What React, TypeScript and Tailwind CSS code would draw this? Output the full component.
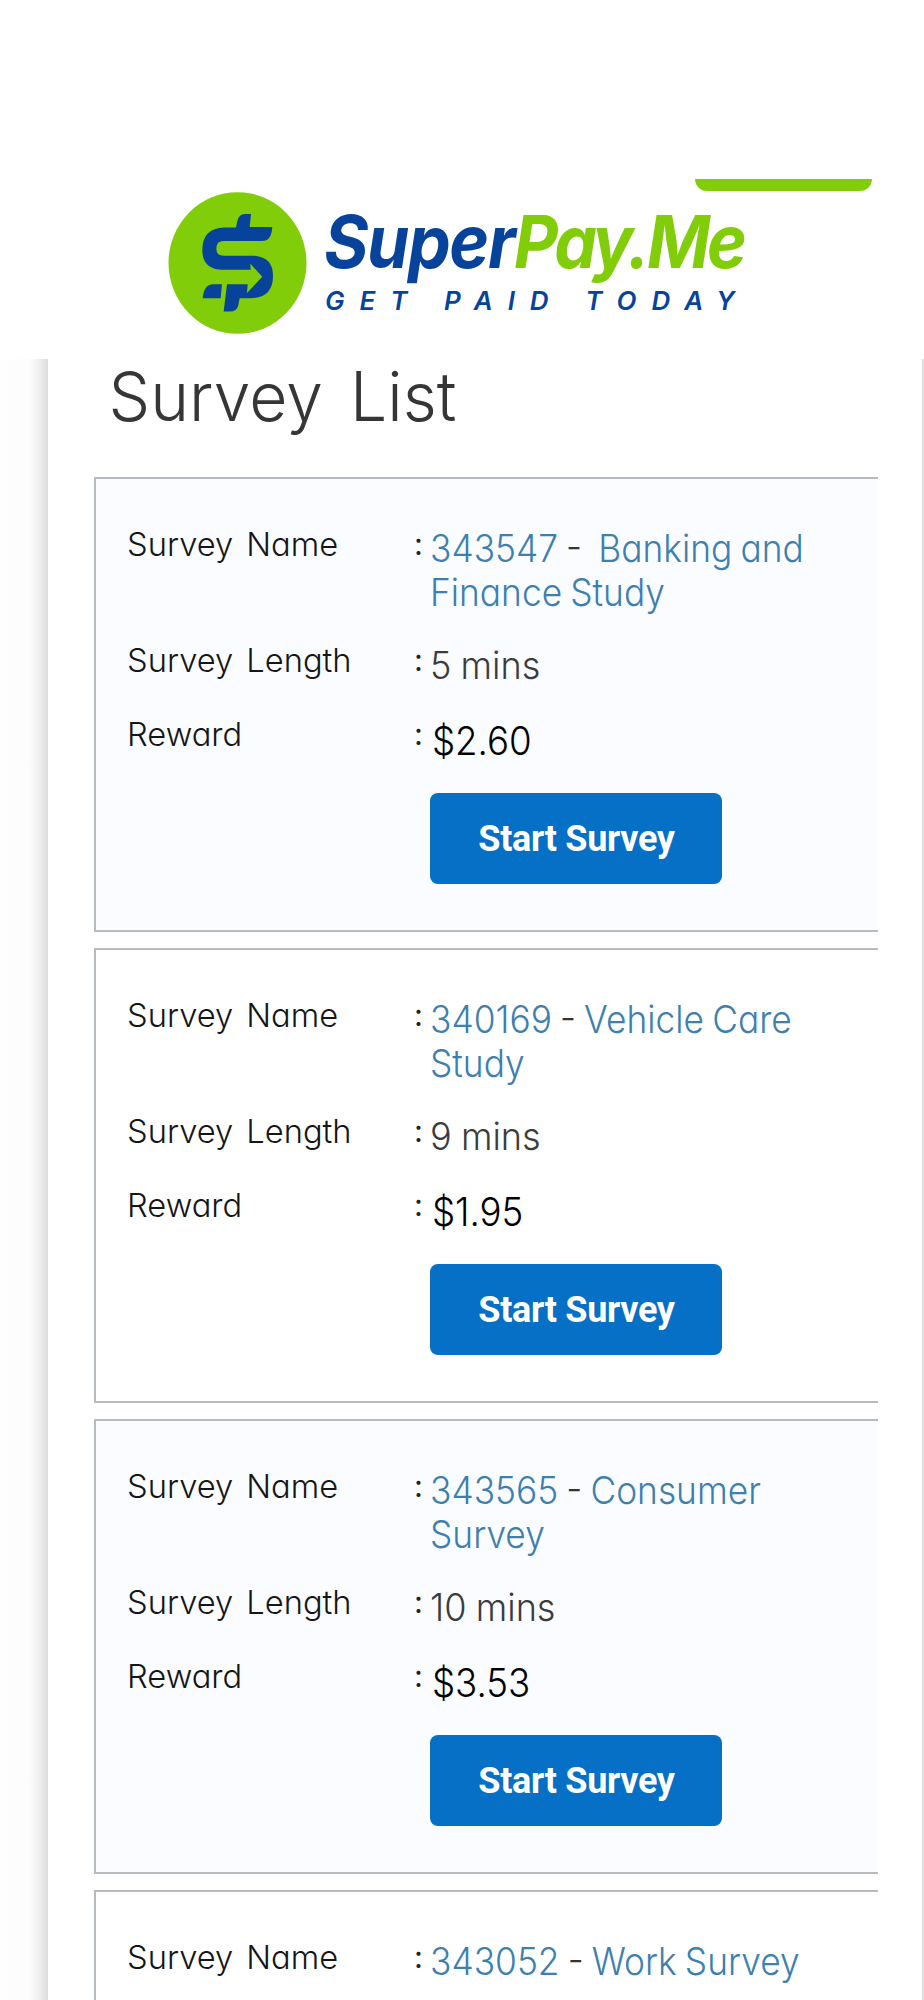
import React from "react";

type Survey = {
  id: string;
  title: string;
  length?: string;
  reward?: string;
  tinted?: boolean;
};

const surveys: Survey[] = [
  { id: "343547", title: "\u00a0Banking and Finance Study", length: "5 mins", reward: "$2.60", tinted: true },
  { id: "340169", title: "Vehicle Care Study", length: "9 mins", reward: "$1.95" },
  { id: "343565", title: "Consumer Survey", length: "10 mins", reward: "$3.53", tinted: true },
  { id: "343052", title: "Work Survey" },
];

function LogoMark() {
  return (
    <svg className="h-[142px] w-[139px] shrink-0" viewBox="55 66 417 425" preserveAspectRatio="none">
      <ellipse cx="263.5" cy="278.5" rx="207" ry="212" fill="#82cd09" />
      <g fill="#07439b">
        <path d="M259 172 L263 153 Q268 132 286 132 H304 L300 171 H368 L366 186 Q361 213 337 213 H222 Q200 213 200 235 Q200 257 222 257 H315 Q370 262 370 317 Q370 384 302 384 H270 L266 405 Q262 424 240 424 H222 L232 342 H294 L292 368 L338 320 L302 281 L303 299 H218 Q158 297 158 240 Q158 174 224 172 Z" />
        <path d="M159 384 Q163 342 190 342 H217 L213 384 Z" />
      </g>
    </svg>
  );
}

function Header() {
  return (
    <header className="h-[359px] bg-white pt-[179px]">
      <div className="flex h-[12px] justify-end pr-[52px]">
        <div className="h-[12px] w-[177px] rounded-b-[14px] bg-[#82cd09]" />
      </div>
      <div className="flex pl-[168px] pt-px">
        <LogoMark />
        <div className="pl-[17px] pt-[13px] italic [font-feature-settings:normal]">
          <div className="flex h-[73px] whitespace-nowrap text-[73px] font-bold leading-[73px]">
            <div className="w-[190px] shrink-0">
              <div className="origin-left scale-x-[0.93] tracking-[-1.5px] text-[#07439b]">Super</div>
            </div>
            <div className="origin-left scale-x-[0.93] tracking-[-3.5px] text-[#82cd09]">Pay.Me</div>
          </div>
          <div className="whitespace-nowrap pl-px pt-[8px] text-[26px] font-semibold leading-[30px] tracking-[15px] text-[#07439b]">
            GET PAID TODAY
          </div>
        </div>
      </div>
    </header>
  );
}

function Row({ label, className, children }: { label: string; className: string; children: React.ReactNode }) {
  return (
    <div className={`flex items-start ${className}`}>
      <div className="w-[286px] shrink-0 text-[33px] font-light leading-9 text-[#161616] [word-spacing:4px]">
        <div className="-ml-px origin-left scale-x-[0.99] whitespace-nowrap">{label}</div>
      </div>
      <div className="w-4 shrink-0 text-[31px] leading-9 text-[#222]">:</div>
      {children}
    </div>
  );
}

function SurveyCard({ survey }: { survey: Survey }) {
  return (
    <article
      className={`h-[455px] shrink-0 border-2 border-r-0 border-[#b5bbbf] pl-8 pt-[47px] ${
        survey.tinted ? "bg-[#fbfcff]" : "bg-white"
      }`}
    >
      <Row label="Survey Name" className="h-[116px]">
        <div className="w-[430px] origin-left scale-x-[0.93] text-[38px] font-light leading-[44px] text-[#3d80b0] [word-spacing:-2px]">
          {survey.id} <span className="text-[#333]">-</span> {survey.title}
        </div>
      </Row>
      {survey.length && (
        <Row label="Survey Length" className="h-[74px]">
          <div className="origin-left scale-x-[0.95] whitespace-nowrap pt-px text-[38px] font-light leading-[44px] text-[#3c3c3c] [word-spacing:-1px]">
            {survey.length}
          </div>
        </Row>
      )}
      {survey.reward && (
        <>
          <Row label="Reward" className="h-[77px]">
            <div className="origin-left scale-x-[0.94] whitespace-nowrap pl-0.5 pt-[3px] text-[39px] font-light leading-[44px] text-black">
              {survey.reward}
            </div>
          </Row>
          <button className="ml-[302px] block h-[91px] w-[292px] rounded-lg bg-[#0570c6] pl-px font-['Roboto',sans-serif] text-[36px] font-bold tracking-[-0.3px] text-white">
            Start Survey
          </button>
        </>
      )}
    </article>
  );
}

export default function App() {
  return (
    <div className="h-[2000px] w-[924px] overflow-hidden bg-white font-['Inter','Liberation_Sans',sans-serif] [font-feature-settings:'cv11']">
      <Header />
      <div className="flex h-[1641px]">
        <div className="w-[48px] shrink-0 bg-[linear-gradient(to_right,#fefefe_0,#fdfdfd_28px,#f1f1f1_38px,#dcdcdc_48px)]" />
        <main className="w-[874px] shrink-0 pl-[46px] pr-[44px]">
          <h1 className="h-[118px] origin-left scale-x-[0.97] whitespace-nowrap pl-[15px] text-[68px] font-light leading-[74px] text-[#363636] [word-spacing:9px]">
            Survey List
          </h1>
          <div className="flex flex-col gap-4">
            {surveys.map((s) => (
              <SurveyCard key={s.id} survey={s} />
            ))}
          </div>
        </main>
        <div className="w-[2px] bg-[#dfdfdf]" />
      </div>
    </div>
  );
}
